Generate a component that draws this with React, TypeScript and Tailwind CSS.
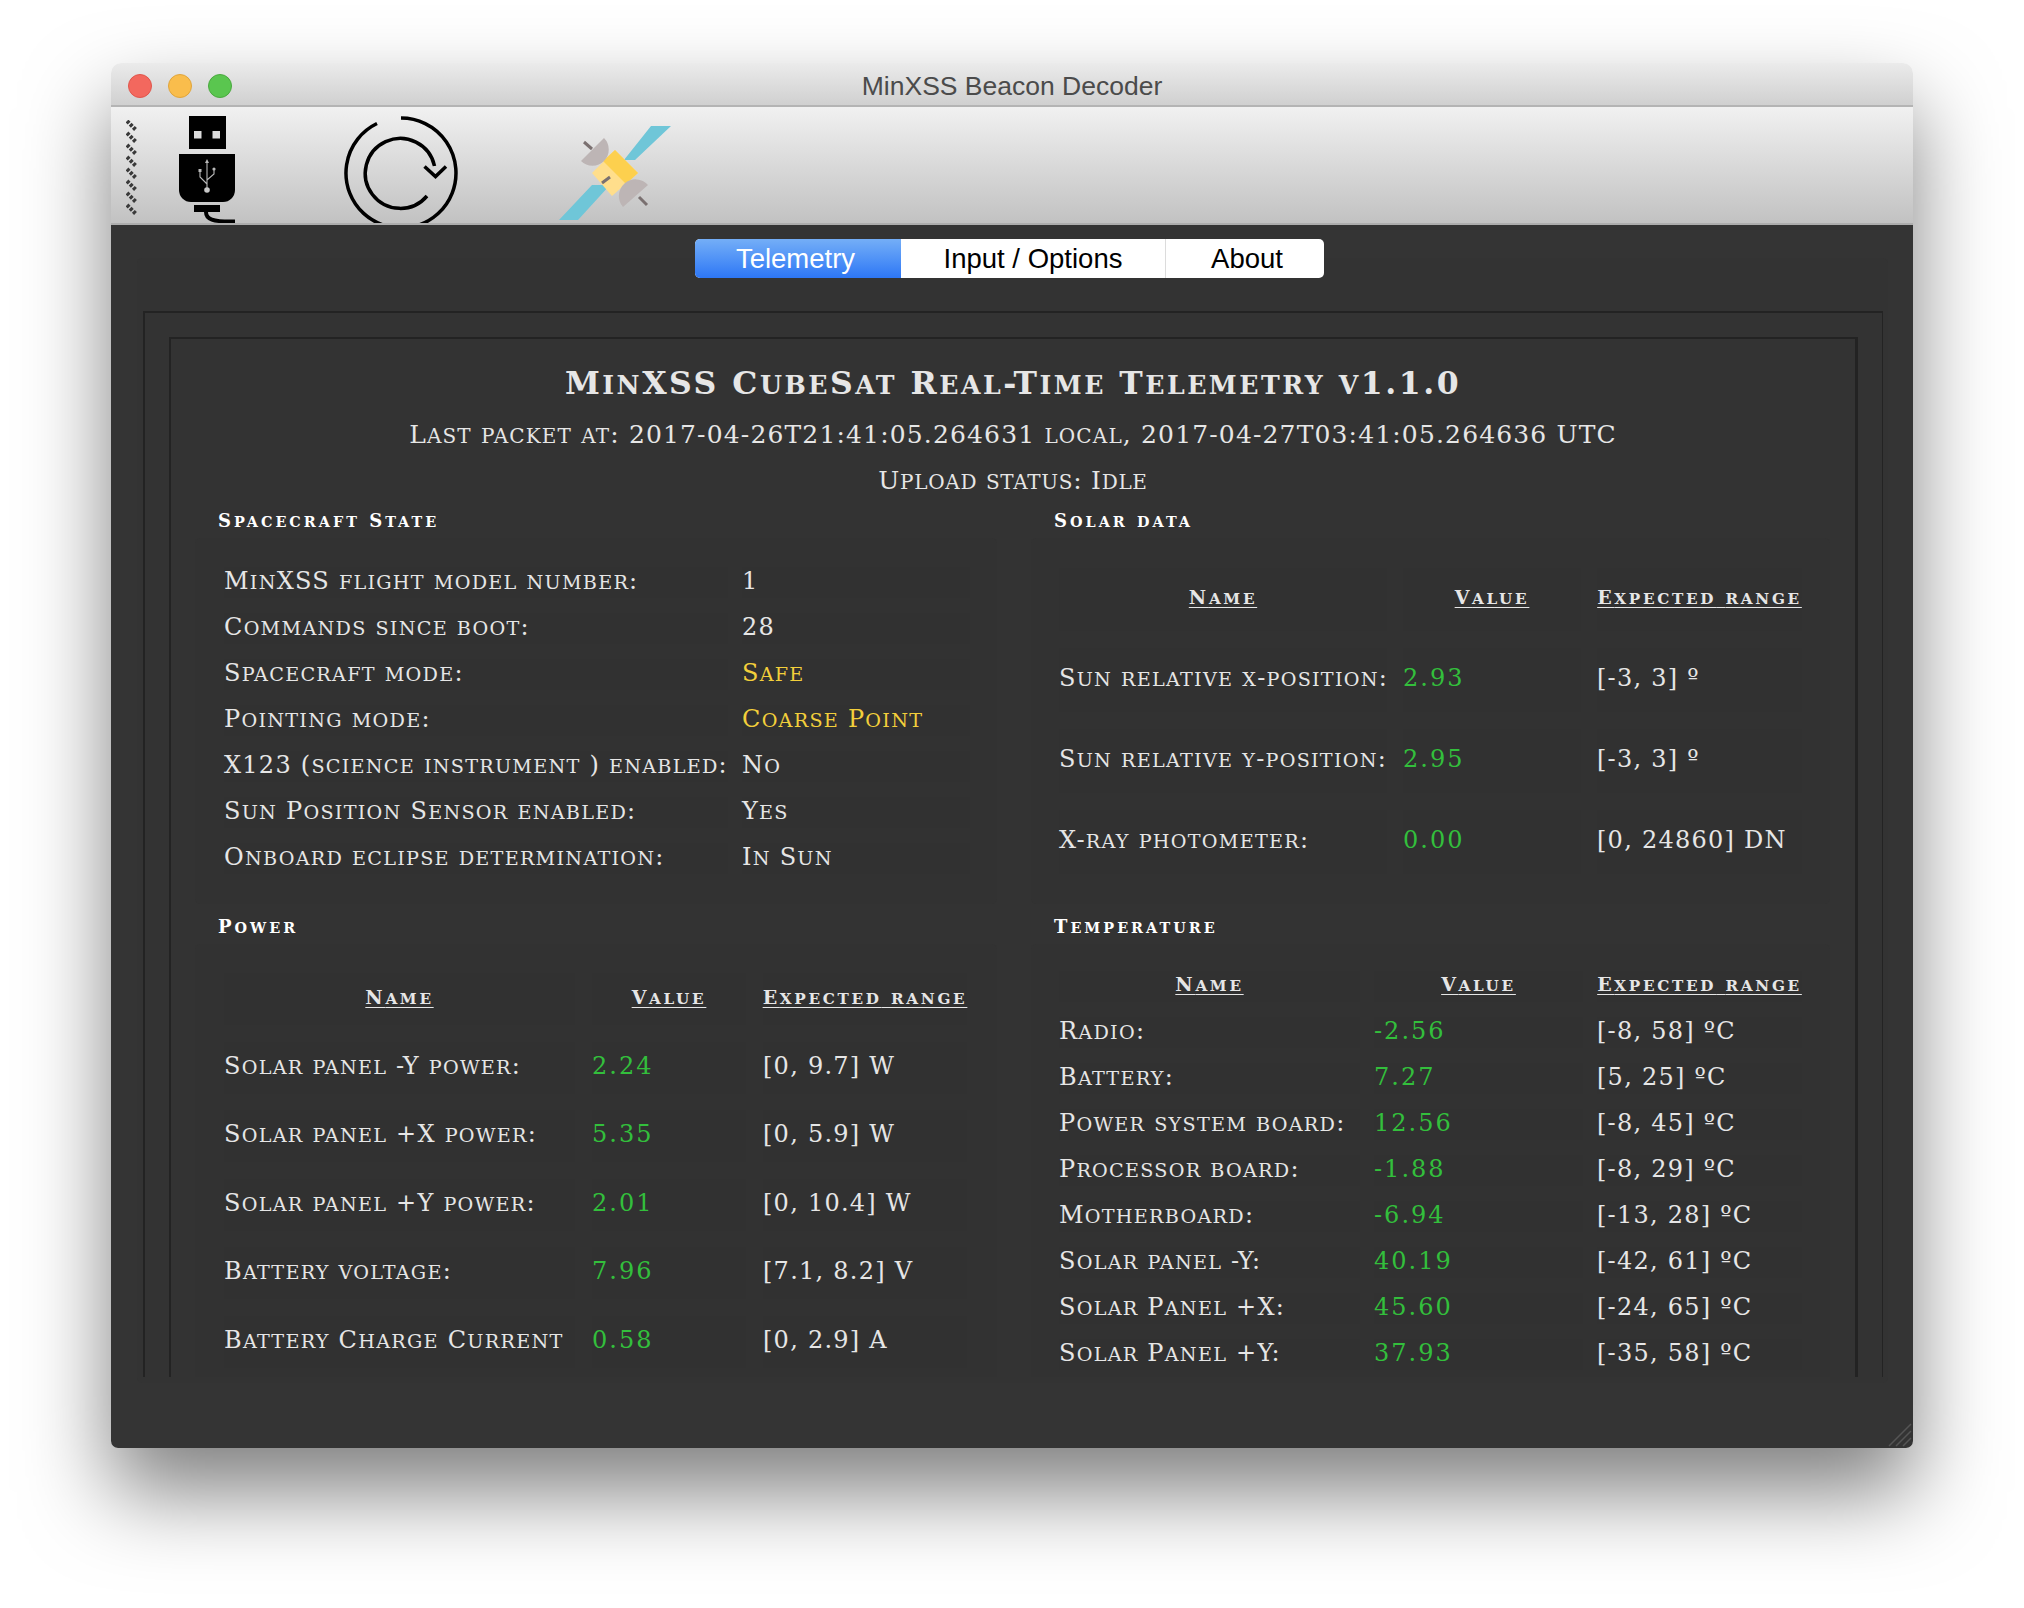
const cap = "[font-family:'DejaVu_Serif','DejaVu_Sans',sans-serif] text-[#e6e6e6]";
const body = "flex items-center bg-[#313131] pb-[4px] text-[24px] tracking-[1.250px] whitespace-nowrap";
const head = "flex items-center justify-center bg-[#313131] pb-[4px] text-[19px] font-bold tracking-[2.700px] whitespace-nowrap underline underline-offset-[3px]";

// the reference face is a copperplate: lower case is drawn as smaller capitals
function Caps({ text }: { text: string }) {
  return (
    <span>
      {text.split(/([a-z]+)/).map((part, i) =>
        /^[a-z]+$/.test(part) ? (
          <span key={i} className="text-[0.8em] uppercase">{part}</span>
        ) : (
          part
        ),
      )}
    </span>
  );
}

function UsbIcon() {
  return (
    <svg viewBox="0 0 56 107" className="h-[107px] w-[56px]">
      <path d="M10 0h37v33h-37z" />
      <path d="M15 15h7.500v7.500h-7.500zM33.500 15h7.500v7.500h-7.500z" fill="#dcdcdc" />
      <path d="M0 38h56v36a12 12 0 0 1-12 12h-32a12 12 0 0 1-12-12z" />
      <path d="M15 89h26v7h-26z" />
      <path d="M27 96c0 7 6 10 29 9.500" fill="none" stroke="#000" strokeWidth="4" />
      <g fill="none" stroke="#b8b8b8" strokeWidth="1.100">
        <path d="M28 46v28M28 68l-7-7v-6M28 64l7-6v-4" />
      </g>
      <circle cx="28" cy="74" r="2.800" fill="#c8c8c8" />
      <path d="M28 43l-2 4h4zM19.500 53h3v3h-3z" fill="#b8b8b8" />
      <circle cx="35" cy="53" r="1.600" fill="#b8b8b8" />
    </svg>
  );
}

function RefreshIcon() {
  return (
    <svg viewBox="0 0 114 107" className="h-[107px] w-[114px]" fill="none" stroke="#000" strokeWidth="3.500">
      <path d="M57 2A55 55 0 1 1 33 7.500" />
      <path d="M90.500 50A35 35 0 1 0 83 80" />
      <path d="M80.500 50.500l11 10 10.500-10" />
    </svg>
  );
}

function SatelliteIcon() {
  return (
    <svg viewBox="0 0 112 97" className="h-[97px] w-[112px]">
      <path d="M92 2h20l-36 34h-11zM33 61h18l-32 35h-19z" fill="#6fc6d8" />
      <path d="M56 26l23 23-26 23-20-23z" fill="#ffde8c" />
      <path d="M56 26l23 23-12 11-23-23z" fill="#fdd04e" />
      <path d="M45 14A16 16 0 0 1 22 37zM64 83A16 16 0 0 1 89 61z" fill="#bdb5b5" />
      <path d="M25 18l8 7M80 73l8 8M43 59l8-6" stroke="#7a7070" strokeWidth="3" />
    </svg>
  );
}

function Grip() {
  return (
    <svg viewBox="0 0 12 96" className="h-[96px] w-[12px]" fill="none" stroke="#3a3a3a" strokeWidth="4" strokeDasharray="3 1.500">
      {[0, 12, 24, 36, 48, 60, 72, 84].map((y) => (
        <path key={y} d={`M1 ${y + 1}l9 9`} />
      ))}
    </svg>
  );
}

function Group({ title, className, children }: { title: string; className: string; children: React.ReactNode }) {
  return (
    <div>
      <div className="ml-[23px] h-[20px] text-[18px] leading-[20px] font-bold tracking-[3px] text-white">
        <Caps text={title} />
      </div>
      <div className={`${className} mt-[7px] rounded-[5px] bg-[#323232]`}>{children}</div>
    </div>
  );
}

function Rows({ rows, h }: { rows: string[][]; h: string }) {
  return (
    <>
      {rows.map((r) => (
        <div key={r[0]} className="contents">
          <div className={`${body} ${h}`}><Caps text={r[0]} /></div>
          <div className={`${body} ${h} tracking-[2px] text-[#33bf3c]`}>{r[1]}</div>
          <div className={`${body} ${h}`}><Caps text={r[2]} /></div>
        </div>
      ))}
    </>
  );
}

const state = [
  ["MinXSS flight model number:", "1", ""],
  ["Commands since boot:", "28", ""],
  ["Spacecraft mode:", "Safe", "y"],
  ["Pointing mode:", "Coarse Point", "y"],
  ["X123 (science instrument ) enabled:", "No", ""],
  ["Sun Position Sensor enabled:", "Yes", ""],
  ["Onboard eclipse determination:", "In Sun", ""],
];
const solar = [
  ["Sun relative x-position:", "2.93", "[-3, 3] º"],
  ["Sun relative y-position:", "2.95", "[-3, 3] º"],
  ["X-ray photometer:", "0.00", "[0, 24860] DN"],
];
const power = [
  ["Solar panel -Y power:", "2.24", "[0, 9.7] W"],
  ["Solar panel +X power:", "5.35", "[0, 5.9] W"],
  ["Solar panel +Y power:", "2.01", "[0, 10.4] W"],
  ["Battery voltage:", "7.96", "[7.1, 8.2] V"],
  ["Battery Charge Current", "0.58", "[0, 2.9] A"],
];
const temps = [
  ["Radio:", "-2.56", "[-8, 58] ºC"],
  ["Battery:", "7.27", "[5, 25] ºC"],
  ["Power system board:", "12.56", "[-8, 45] ºC"],
  ["Processor board:", "-1.88", "[-8, 29] ºC"],
  ["Motherboard:", "-6.94", "[-13, 28] ºC"],
  ["Solar panel -Y:", "40.19", "[-42, 61] ºC"],
  ["Solar Panel +X:", "45.60", "[-24, 65] ºC"],
  ["Solar Panel +Y:", "37.93", "[-35, 58] ºC"],
];

export default function App() {
  return (
    <div className="h-[1608px] w-[2024px] overflow-hidden bg-white pt-[63px] pl-[111px] font-['Liberation_Sans',sans-serif]">
      <div className="flex h-[1385px] w-[1802px] flex-col overflow-hidden rounded-t-[10px] rounded-b-[7px] shadow-[0_44px_85px_rgba(0,0,0,0.5)]">
        <div className="relative flex h-[44px] items-center justify-center border-b-2 border-[#b4b4b4] bg-gradient-to-b from-[#ebebeb] to-[#d0d0d0] pt-[5px] text-[26.500px] text-[#4b4b4b]">
          <div className="absolute top-[11px] left-[17px] flex gap-[16px]">
            <span className="h-[24px] w-[24px] rounded-full border border-[#e0564c] bg-[#f3685e]" />
            <span className="h-[24px] w-[24px] rounded-full border border-[#e0a53c] bg-[#f9bd4c]" />
            <span className="h-[24px] w-[24px] rounded-full border border-[#4aa93f] bg-[#5ac64f]" />
          </div>
          MinXSS Beacon Decoder
        </div>
        <div className="flex h-[118px] items-start overflow-hidden border-b-2 border-[#adadad] bg-gradient-to-b from-[#f1f1f1] to-[#c2c2c2] pt-[9px] pl-[15px]">
          <div className="mt-[4px]"><Grip /></div>
          <div className="ml-[41px]"><UsbIcon /></div>
          <div className="ml-[109px]"><RefreshIcon /></div>
          <div className="mt-[8px] ml-[101px]"><SatelliteIcon /></div>
        </div>
        <div className="relative flex min-h-0 flex-1 flex-col bg-[#343434] pt-[14px] pr-[25px] pl-[26px]">
          <div className="relative z-10 ml-[558px] flex h-[39px] w-[629px] overflow-hidden rounded-[5px] bg-white text-[27.500px] text-black">
            <div className="flex w-[206px] items-center justify-center bg-gradient-to-b from-[#74aef7] to-[#2d76f5] pr-[5px] text-white">Telemetry</div>
            <div className="flex w-[265px] items-center justify-center border-r border-[#dcdcdc]">Input / Options</div>
            <div className="flex flex-1 items-center justify-center pl-[4px]">About</div>
          </div>
          <div className="-mt-[20px] h-[1125px] rounded-[5px] bg-[#333333] pt-[53px] pr-[5px] pl-[6px]">
            <div className="h-[1066px] overflow-hidden border-t-2 border-r border-l-2 border-t-[#232323] border-r-[#232323] border-l-[#232323] pt-[24px] pl-[24px]">
              <div className={`${cap} mr-[24px] h-full overflow-hidden border-t-2 border-r-[3px] border-l-2 border-[#232323] pt-[27px]`}>
                <div className="h-[34px] text-center text-[31.500px] leading-[34px] font-bold tracking-[2.500px] whitespace-nowrap"><Caps text="MinXSS CubeSat Real-Time Telemetry v1.1.0" /></div>
                <div className="mt-[20px] h-[30px] text-center text-[25px] leading-[30px] tracking-[1.150px] whitespace-nowrap"><Caps text="Last packet at: 2017-04-26T21:41:05.264631 local, 2017-04-27T03:41:05.264636 UTC" /></div>
                <div className="mt-[16px] h-[30px] text-center text-[25px] leading-[30px] tracking-[0.700px]"><Caps text="Upload status: Idle" /></div>
                <div className="mt-[15px] grid grid-cols-[802px_799px] gap-x-[34px] pl-[24px]">
                  <div>
                    <Group title="Spacecraft State" className="h-[366px] px-[29px] pt-[29px]">
                      <div className="grid grid-cols-[504px_228px] gap-x-[14px] gap-y-[15px]">
                        {state.map((r) => (
                          <div key={r[0]} className="contents">
                            <div className={`${body} h-[31px]`}><Caps text={r[0]} /></div>
                            <div className={`${body} h-[31px] ${r[2] ? "text-[#f3cf3b]" : ""}`}><Caps text={r[1]} /></div>
                          </div>
                        ))}
                      </div>
                    </Group>
                    <div className="h-[13px]" />
                    <Group title="Power" className="h-[480px] px-[29px] pt-[29px]">
                      <div className="grid grid-cols-[351px_154px_204px] gap-x-[17px] gap-y-[16.500px]">
                        <div className={`${head} h-[52px]`}><Caps text="Name" /></div>
                        <div className={`${head} h-[52px]`}><Caps text="Value" /></div>
                        <div className={`${head} h-[52px]`}><Caps text="Expected range" /></div>
                        <Rows rows={power} h="h-[52px]" />
                      </div>
                    </Group>
                  </div>
                  <div>
                    <Group title="Solar data" className="h-[366px] pt-[30px] pl-[28px]">
                      <div className="grid grid-cols-[328px_178px_205px] gap-x-[16px] gap-y-[17px]">
                        <div className={`${head} h-[63px]`}><Caps text="Name" /></div>
                        <div className={`${head} h-[63px]`}><Caps text="Value" /></div>
                        <div className={`${head} h-[63px]`}><Caps text="Expected range" /></div>
                        <Rows rows={solar} h="h-[64px]" />
                      </div>
                    </Group>
                    <div className="h-[13px]" />
                    <Group title="Temperature" className="h-[480px] pt-[27px] pl-[28px]">
                      <div className="grid grid-cols-[301px_209px_205px] gap-x-[14px] gap-y-[15px]">
                        <div className={`${head} h-[31px]`}><Caps text="Name" /></div>
                        <div className={`${head} h-[31px]`}><Caps text="Value" /></div>
                        <div className={`${head} h-[31px]`}><Caps text="Expected range" /></div>
                        <Rows rows={temps} h="h-[31px]" />
                      </div>
                    </Group>
                  </div>
                </div>
              </div>
            </div>
          </div>
          <svg viewBox="0 0 24 24" className="absolute right-[1px] bottom-[1px] h-[24px] w-[24px]" fill="none" stroke="#555" strokeWidth="1.500">
            <path d="M1 23L23 1M8 23L23 8M15 23l8-8" />
          </svg>
        </div>
      </div>
    </div>
  );
}
